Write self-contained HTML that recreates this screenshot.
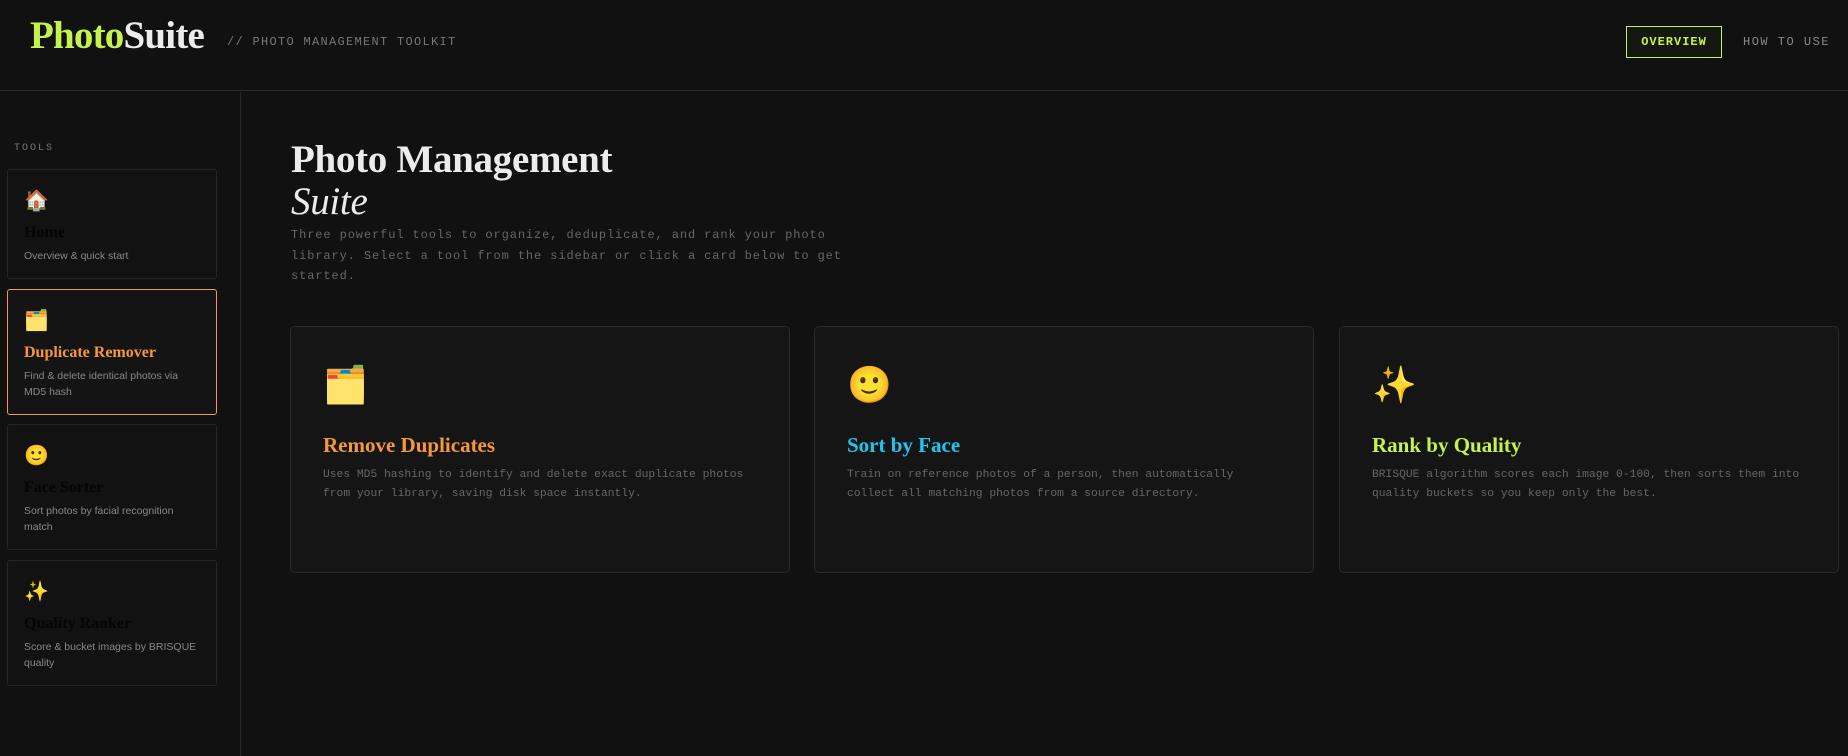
<!DOCTYPE html>
<html><head><meta charset="utf-8"><style>
*{margin:0;padding:0;box-sizing:border-box}
body{width:1848px;height:756px;background:#111111;overflow:hidden;font-family:"Liberation Sans",sans-serif;position:relative}
.mono{font-family:"Liberation Mono",monospace}
.serif{font-family:"Liberation Serif",serif}
header{position:absolute;left:0;top:0;width:1848px;height:91px;border-bottom:1px solid #2a2a2a}
.logo{position:absolute;left:30px;top:13px;font-size:39px;font-weight:bold;color:#ececec;letter-spacing:-0.8px}
.logo span{color:#c6f24e}
.tag{position:absolute;left:227px;top:35px;font-size:12px;letter-spacing:1.3px;color:#777}
.btn{position:absolute;left:1626px;top:26px;width:96px;height:32px;border:1px solid #c6f24e;color:#c6f24e;font-size:12px;font-weight:bold;letter-spacing:1px;text-align:center;line-height:30px;background:#151812}
.how{position:absolute;left:1743px;top:35px;font-size:12px;letter-spacing:1.5px;color:#888}
.side{position:absolute;left:0;top:92px;width:241px;height:664px;border-right:1px solid #262626}
.tools{position:absolute;left:14px;top:51px;font-size:10px;letter-spacing:2px;color:#777}
.sc{position:absolute;left:7px;width:210px;border:1px solid #262626;border-radius:3px;background:#121212;padding:0 16px}
.sc.act{border-color:#f5973a;background:#141414}
.sc .em{font-size:20px;line-height:22px;margin-top:20px}
.sc .t{font-size:16px;font-weight:bold;color:#050505;margin-top:12px}
.sc.act .t{color:#f5973a}
.sc .d{font-size:10.5px;color:#888;line-height:16px;margin-top:6px}
h1{position:absolute;left:291px;top:139px;font-size:39px;line-height:42px;color:#ececec;font-weight:bold;letter-spacing:-0.3px}
h1 i{font-weight:normal;display:block}
.p{position:absolute;left:291px;top:225px;width:560px;font-size:12px;line-height:20.5px;letter-spacing:0.9px;color:#666}
.card{position:absolute;top:326px;width:500px;height:247px;border:1px solid #2a2a2a;border-radius:5px;background:#151515;padding:0 32px}
.card .em{font-size:36px;line-height:40px;margin-top:38px}
.card .t{font-size:21px;font-weight:bold;margin-top:28px}
.card .d{font-size:11.3px;line-height:19px;color:#666;margin-top:8px;letter-spacing:0}
</style></head><body>
<header>
<div class="logo serif"><span>Photo</span>Suite</div>
<div class="tag mono">// PHOTO MANAGEMENT TOOLKIT</div>
<div class="btn mono">OVERVIEW</div>
<div class="how mono">HOW TO USE</div>
</header>
<div class="side">
<div class="tools mono">TOOLS</div>
<div class="sc" style="top:77px;height:110px"><div class="em">🏠</div><div class="t serif">Home</div><div class="d">Overview &amp; quick start</div></div>
<div class="sc act" style="top:197px;height:126px"><div class="em">🗂️</div><div class="t serif">Duplicate Remover</div><div class="d">Find &amp; delete identical photos via MD5 hash</div></div>
<div class="sc" style="top:332px;height:126px"><div class="em">🙂</div><div class="t serif">Face Sorter</div><div class="d">Sort photos by facial recognition match</div></div>
<div class="sc" style="top:468px;height:126px"><div class="em">✨</div><div class="t serif">Quality Ranker</div><div class="d">Score &amp; bucket images by BRISQUE quality</div></div>
</div>
<h1 class="serif">Photo Management<i>Suite</i></h1>
<div class="p mono">Three powerful tools to organize, deduplicate, and rank your photo library. Select a tool from the sidebar or click a card below to get started.</div>
<div class="card" style="left:290px"><div class="em">🗂️</div><div class="t serif" style="color:#f5973a">Remove Duplicates</div><div class="d mono">Uses MD5 hashing to identify and delete exact duplicate photos from your library, saving disk space instantly.</div></div>
<div class="card" style="left:814px"><div class="em">🙂</div><div class="t serif" style="color:#1ec8f0">Sort by Face</div><div class="d mono">Train on reference photos of a person, then automatically collect all matching photos from a source directory.</div></div>
<div class="card" style="left:1339px"><div class="em">✨</div><div class="t serif" style="color:#c6f24e">Rank by Quality</div><div class="d mono">BRISQUE algorithm scores each image 0-100, then sorts them into quality buckets so you keep only the best.</div></div>
</body></html>
